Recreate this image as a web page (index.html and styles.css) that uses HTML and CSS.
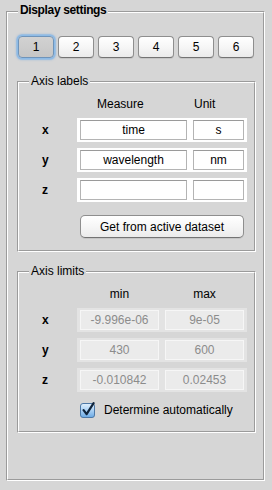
FILE: index.html
```html
<!DOCTYPE html>
<html>
<head>
<meta charset="utf-8">
<link rel="stylesheet" href="styles.css">
</head>
<body>
<div class="groove panel">
  <div class="groove-in panel-body">
    <span class="legend legend-bold">Display settings</span>
    <div class="tabs">
      <button class="btn tab selected">1</button>
      <button class="btn tab">2</button>
      <button class="btn tab">3</button>
      <button class="btn tab">4</button>
      <button class="btn tab">5</button>
      <button class="btn tab">6</button>
    </div>

    <div class="groove frame frame-labels">
      <div class="groove-in frame-body">
        <span class="legend">Axis labels</span>
        <div class="row head">
          <span></span>
          <div class="cells">
            <span class="h-measure">Measure</span>
            <span class="h-unit">Unit</span>
          </div>
        </div>
        <div class="rows">
          <div class="row">
            <span class="axis">x</span>
            <div class="strip">
              <span class="field f-measure">time</span>
              <span class="field f-unit">s</span>
            </div>
          </div>
          <div class="row">
            <span class="axis">y</span>
            <div class="strip">
              <span class="field f-measure">wavelength</span>
              <span class="field f-unit">nm</span>
            </div>
          </div>
          <div class="row">
            <span class="axis">z</span>
            <div class="strip">
              <span class="field f-measure"></span>
              <span class="field f-unit"></span>
            </div>
          </div>
        </div>
        <button class="btn get-btn">Get from active dataset</button>
      </div>
    </div>

    <div class="groove frame frame-limits">
      <div class="groove-in frame-body">
        <span class="legend">Axis limits</span>
        <div class="row head">
          <span></span>
          <div class="cells">
            <span class="h-lim">min</span>
            <span class="h-lim">max</span>
          </div>
        </div>
        <div class="rows">
          <div class="row">
            <span class="axis">x</span>
            <div class="strip strip-off">
              <span class="field off f-lim">-9.996e-06</span>
              <span class="field off f-lim">9e-05</span>
            </div>
          </div>
          <div class="row">
            <span class="axis">y</span>
            <div class="strip strip-off">
              <span class="field off f-lim">430</span>
              <span class="field off f-lim">600</span>
            </div>
          </div>
          <div class="row">
            <span class="axis">z</span>
            <div class="strip strip-off">
              <span class="field off f-lim">-0.010842</span>
              <span class="field off f-lim">0.02453</span>
            </div>
          </div>
        </div>
        <label class="check-row">
          <svg class="check" width="16" height="16" viewBox="0 0 16 16">
            <defs>
              <linearGradient id="cg" x1="0" y1="0" x2="0" y2="1">
                <stop offset="0" stop-color="#e2f0fc"/>
                <stop offset="0.5" stop-color="#a9d0f4"/>
                <stop offset="1" stop-color="#6aa9e4"/>
              </linearGradient>
            </defs>
            <rect x="0.5" y="1.5" width="14" height="14" rx="2.5" fill="url(#cg)" stroke="#4d78a6"/>
            <path d="M3.6 8.2 L6.6 12.2 L13.6 1.2" fill="none" stroke="#10253c" stroke-width="2.2" stroke-linecap="round" stroke-linejoin="round"/>
          </svg>
          <span>Determine automatically</span>
        </label>
      </div>
    </div>
  </div>
</div>
</body>
</html>
```

FILE: styles.css
```css
* { box-sizing: border-box; }

html, body {
  margin: 0;
  padding: 0;
  background: #d6d6d6;
  font-family: "Liberation Sans", Arial, sans-serif;
  font-size: 12px;
  color: #000;
  width: 272px;
  height: 490px;
  overflow: hidden;
}

.groove {
  position: relative;
  border: 1px solid;
  border-color: #9b9b9b #ffffff #ffffff #9b9b9b;
}

.groove-in {
  border: 1px solid;
  border-color: #ffffff #9b9b9b #9b9b9b #ffffff;
}

.panel {
  margin: 11px 7px 0 6px;
}

.panel-body {
  padding: 23px 7px 46px 9px;
}

.legend {
  position: absolute;
  left: 11px;
  top: -8px;
  padding: 0 2px;
  background: #d6d6d6;
  line-height: 14px;
  white-space: nowrap;
}

.legend-bold {
  top: -9px;
  font-weight: bold;
  letter-spacing: -0.35px;
}

.tabs {
  display: flex;
  gap: 4px;
  margin: 0 0 23px 1px;
  height: 22px;
}

.btn {
  font-family: "Liberation Sans", Arial, sans-serif;
  font-size: 12px;
  color: #000;
  border: 1px solid #8e8e8e;
  border-bottom-color: #737373;
  border-radius: 4px;
  background: linear-gradient(#ffffff, #f6f6f6 50%, #ebebeb);
  box-shadow: 0 1px 0 rgba(0,0,0,0.08);
  padding: 0;
  margin: 0;
}

.tab {
  width: 36px;
  height: 22px;
}

.tab.selected {
  background: linear-gradient(#d2d2d2, #c6c6c6);
  border-color: #6f94ba;
  box-shadow: 0 0 0 1.5px #8ebbe6, 0 0 2px 2px rgba(120,170,225,0.6);
}

.frame-labels {
  margin-bottom: 19px;
}

.frame-body {
  padding: 14px 0 12px 0;
}

.frame-limits .frame-body {
  padding-bottom: 13px;
}

.row {
  display: grid;
  grid-template-columns: 58px 170px;
  align-items: center;
}

.head {
  height: 14px;
  line-height: 14px;
  margin-bottom: 7px;
}

.cells {
  display: flex;
  gap: 6px;
  padding: 0 3px;
}

.h-measure {
  width: 107px;
  padding-left: 17px;
}

.h-unit {
  width: 51px;
  padding-left: 1px;
}

.h-lim {
  width: 79px;
  text-align: center;
}

.rows {
  display: flex;
  flex-direction: column;
  gap: 6px;
}

.axis {
  padding-left: 23px;
  font-weight: bold;
  line-height: 14px;
}

.strip {
  display: flex;
  gap: 6px;
  height: 24px;
  padding: 2px 3px;
  background: #ffffff;
}

.strip-off {
  background: #e3e3e3;
}

.field {
  height: 20px;
  border: 1px solid #b4b4b4;
  border-top-color: #9a9a9a;
  background: #ffffff;
  display: flex;
  align-items: center;
  justify-content: center;
  white-space: nowrap;
  overflow: hidden;
}

.f-measure { width: 107px; }
.f-unit { width: 51px; }
.f-lim { width: 79px; }

.field.off {
  background: #ebebeb;
  border-color: #f6f6f6;
  color: #8c8c8c;
}

.get-btn {
  display: block;
  margin: 13px 0 0 61px;
  width: 164px;
  height: 23px;
  border-radius: 5px;
}

.check-row {
  display: flex;
  align-items: center;
  gap: 8px;
  margin: 10px 0 0 61px;
  height: 16px;
}

.check {
  display: block;
  flex: none;
}
```
